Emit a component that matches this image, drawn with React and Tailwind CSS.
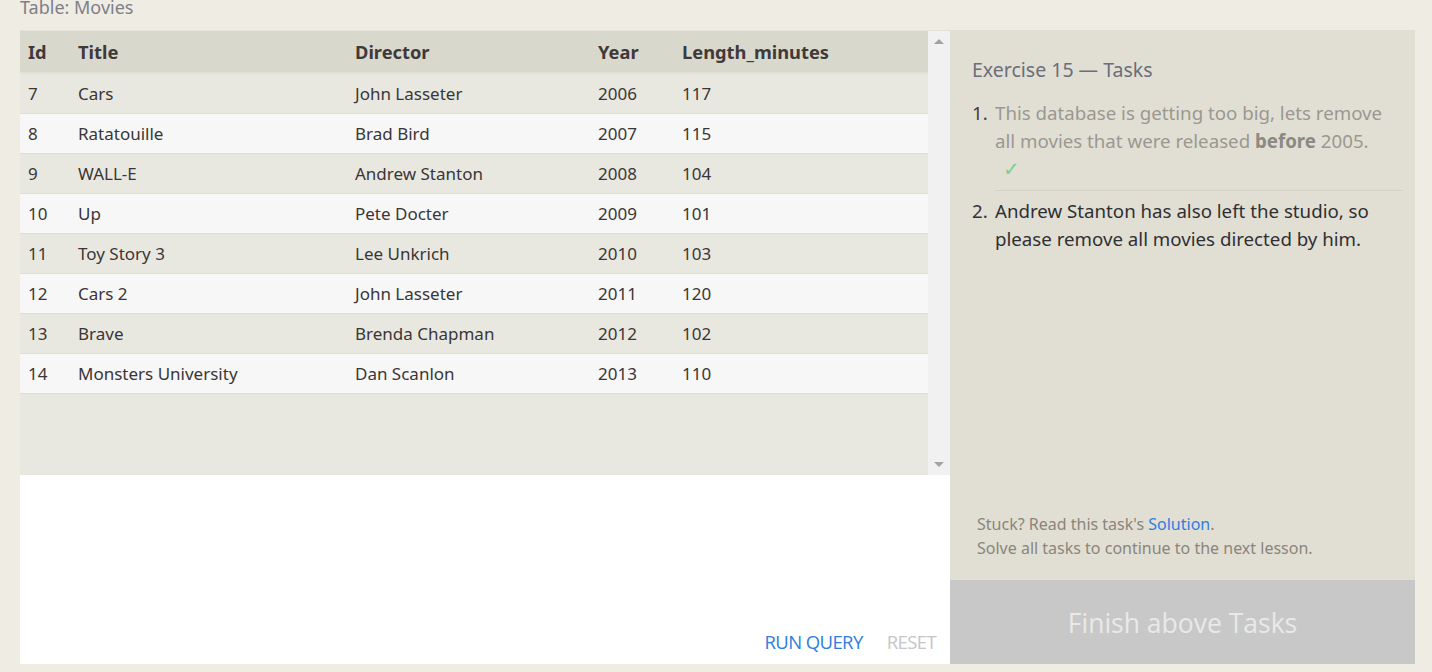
const rows = [
  [7, 'Cars', 'John Lasseter', 2006, 117],
  [8, 'Ratatouille', 'Brad Bird', 2007, 115],
  [9, 'WALL-E', 'Andrew Stanton', 2008, 104],
  [10, 'Up', 'Pete Docter', 2009, 101],
  [11, 'Toy Story 3', 'Lee Unkrich', 2010, 103],
  [12, 'Cars 2', 'John Lasseter', 2011, 120],
  [13, 'Brave', 'Brenda Chapman', 2012, 102],
  [14, 'Monsters University', 'Dan Scanlon', 2013, 110],
];

const Cols = 'grid grid-cols-[50px_277px_243px_84px_1fr] pl-[8px]';

export default function App() {
  return (
    <div className="w-[1432px] h-[672px] overflow-hidden bg-[#efece4] font-['Noto_Sans',sans-serif] relative">
      <div className="pl-[20px] text-[18px] leading-[18px] text-[#7d7f88] -mt-[2px]">Table: Movies</div>
      <div className="flex pl-[20px] mt-[14px]">
        <div className="w-[930px] h-[634px] flex flex-col border-t border-[#e4e3da] bg-white">
          <div className="flex h-[444px]">
            <div className="w-[908px] bg-[#e9e8e0] flex flex-col">
              <div className={`${Cols} h-[43px] items-center bg-[#d9d8cc] font-bold text-[18.3px] text-[#40393a] border-b-2 border-[#e2e1d8]`}>
                <div>Id</div>
                <div>Title</div>
                <div>Director</div>
                <div>Year</div>
                <div>Length_minutes</div>
              </div>
              {rows.map((r, i) => (
                <div
                  key={r[0]}
                  className={`${Cols} h-[40px] items-center text-[17px] text-[#3a3636] border-b border-[#dedcd3] ${i % 2 ? 'bg-[#f7f7f7]' : 'bg-[#e9e8e0]'}`}
                >
                  {r.map((c, j) => (
                    <div key={j}>{c}</div>
                  ))}
                </div>
              ))}
            </div>
            <div className="w-[22px] bg-[#f1f1f1] flex flex-col justify-between items-center py-[8px]">
              <div className="w-0 h-0 border-l-[5px] border-r-[5px] border-b-[5px] border-l-transparent border-r-transparent border-b-[#a3a3a3]" />
              <div className="w-0 h-0 border-l-[5px] border-r-[5px] border-t-[5px] border-l-transparent border-r-transparent border-t-[#a3a3a3]" />
            </div>
          </div>
          <div className="flex-1 flex items-end justify-end gap-[24px] pr-[14px] pb-[8px] text-[18.5px] font-['Open_Sans',sans-serif] tracking-[-0.6px]">
            <span className="text-[#2f7de1]">RUN QUERY</span>
            <span className="text-[#c6c6c6]">RESET</span>
          </div>
        </div>
        <div className="w-[465px] h-[634px] flex flex-col">
          <div className="flex-1 bg-[#e1dfd4] flex flex-col pl-[22px] pr-[12px] pt-[25px] pb-[20px]">
            <div className="text-[19.5px] text-[#6a6e7b]">Exercise 15 — Tasks</div>
            <ol className="mt-[15px] text-[18.7px] leading-[28px]">
              <li className="flex">
                <span className="w-[23px] text-[#4a3a33]">1.</span>
                <div className="flex-1 text-[#9a9890] border-b border-[#d3d1c6] pb-[7px]">
                  This database is getting too big, lets remove all movies that were released <b className="text-[#8b8983]">before</b> 2005.
                  <div className="pl-[8px] text-[#80cf8e] text-[20px] leading-[28px]">✓</div>
                </div>
              </li>
              <li className="flex mt-[6px]">
                <span className="w-[23px] text-[#333]">2.</span>
                <div className="flex-1 text-[#2f2f33]">Andrew Stanton has also left the studio, so please remove all movies directed by him.</div>
              </li>
            </ol>
            <div className="mt-auto pl-[5px] text-[16px] leading-[24px] text-[#8b857a]">
              <div>Stuck? Read this task's <span className="text-[#2f7de1]">Solution</span>.</div>
              <div>Solve all tasks to continue to the next lesson.</div>
            </div>
          </div>
          <div className="h-[84px] bg-[#c8c8c8] flex items-center justify-center text-[26.5px] text-[#e9e9e9] font-['Open_Sans',sans-serif] pt-[4px]">
            Finish above Tasks
          </div>
        </div>
      </div>
    </div>
  );
}
